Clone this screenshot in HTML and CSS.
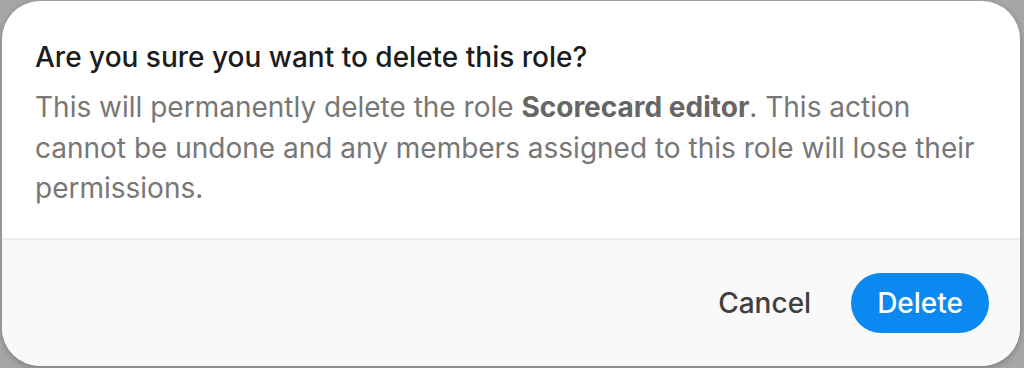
FILE: index.html
```html
<!DOCTYPE html>
<html lang="en">
<head>
<meta charset="utf-8">
<title>Delete role</title>
<link rel="stylesheet" href="styles.css">
</head>
<body>
<div class="backdrop">
  <div class="dialog" role="alertdialog" aria-labelledby="dlg-title">
    <div class="dialog-body">
      <h2 class="dialog-title" id="dlg-title">Are you sure you want to delete this role?</h2>
      <p class="dialog-text">This will permanently delete the role <strong>Scorecard editor</strong>. This action cannot be undone and any members assigned to this role will lose their permissions.</p>
    </div>
    <div class="dialog-footer">
      <button class="btn btn-ghost" type="button">Cancel</button>
      <button class="btn btn-primary" type="button">Delete</button>
    </div>
  </div>
</div>
</body>
</html>
```
FILE: styles.css
```css
html, body {
  margin: 0;
  padding: 0;
  height: 100%;
}
body {
  font-family: Inter, "Noto Sans", sans-serif;
  background: #a6a6a6;
}
.backdrop {
  box-sizing: border-box;
  height: 368px;
  padding: 1px 4px 2px 2px;
  display: flex;
}
.dialog {
  flex: 1;
  background: #ffffff;
  border-radius: 38px;
  overflow: hidden;
  display: flex;
  flex-direction: column;
  box-shadow: 0 2px 6px rgba(0,0,0,0.25);
}
.dialog-body {
  padding: 39px 33px 0 33px;
  height: 239px;
  box-sizing: border-box;
  border-bottom: 2px solid #ececec;
}
.dialog-title {
  margin: 0;
  font-size: 28px;
  font-weight: 500;
  color: #1c1c1c;
  line-height: 34px;
}
.dialog-text {
  margin: 13px 0 0 0;
  font-size: 28px;
  line-height: 40.5px;
  color: #777777;
}
.dialog-text strong {
  font-weight: 700;
  color: #666666;
}
.dialog-footer {
  flex: 1;
  background: #f9f9f9;
  display: flex;
  justify-content: flex-end;
  align-items: center;
  gap: 20px;
  padding: 0 31px 0 0;
}
.btn {
  font-family: inherit;
  font-size: 28px;
  border: none;
  cursor: pointer;
  height: 60px;
  border-radius: 30px;
  padding: 0 26px;
}
.btn-ghost {
  background: transparent;
  color: #404040;
  font-weight: 500;
  padding: 0 20px;
}
.btn-primary {
  background: #0a8af0;
  color: #ffffff;
  font-weight: 500;
}
```
